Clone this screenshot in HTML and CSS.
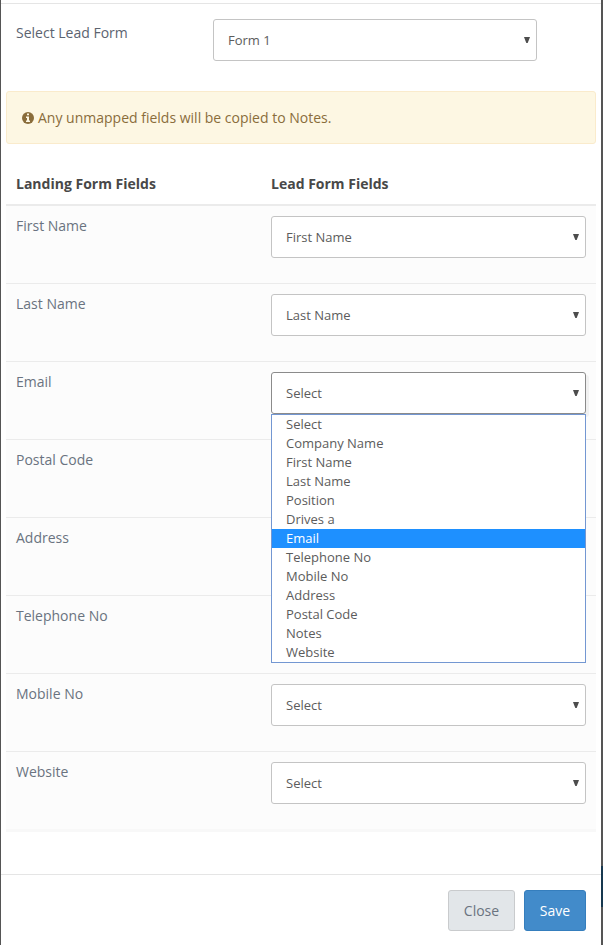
FILE: index.html
```html
<!DOCTYPE html>
<html lang="en">
<head>
<meta charset="utf-8">
<title>Field Mapping</title>
<link rel="stylesheet" href="styles.css">
</head>
<body>
<div class="modal">
  <div class="modal-top"></div>
  <div class="form-row">
    <label>Select Lead Form</label>
    <div class="select lead-select"><span>Form 1</span><svg class="caret" viewBox="0 0 6 6"><path d="M0 0H6L3.7 6H2.3Z"/></svg></div>
  </div>
  <div class="alert">
    <svg class="info" viewBox="0 0 12 12"><circle cx="6" cy="6" r="6"/><path d="M5 1.5H7V3.3H5ZM4 4.5H7V8.5H8V10H4V8.5H5V6H4Z"/></svg>
    <span>Any unmapped fields will be copied to Notes.</span>
  </div>
  <div class="table">
    <div class="thead"><div>Landing Form Fields</div><div>Lead Form Fields</div></div>
    <div class="row"><div class="name">First Name</div><div class="select"><span>First Name</span><svg class="caret" viewBox="0 0 6 6"><path d="M0 0H6L3.7 6H2.3Z"/></svg></div></div>
    <div class="row"><div class="name">Last Name</div><div class="select"><span>Last Name</span><svg class="caret" viewBox="0 0 6 6"><path d="M0 0H6L3.7 6H2.3Z"/></svg></div></div>
    <div class="row"><div class="name">Email</div><div class="select open"><span>Select</span><svg class="caret" viewBox="0 0 6 6"><path d="M0 0H6L3.7 6H2.3Z"/></svg>
      <ul class="options">
        <li>Select</li><li>Company Name</li><li>First Name</li><li>Last Name</li><li>Position</li><li>Drives a</li><li class="active">Email</li><li>Telephone No</li><li>Mobile No</li><li>Address</li><li>Postal Code</li><li>Notes</li><li>Website</li>
      </ul></div></div>
    <div class="row"><div class="name">Postal Code</div></div>
    <div class="row"><div class="name">Address</div></div>
    <div class="row"><div class="name">Telephone No</div></div>
    <div class="row"><div class="name">Mobile No</div><div class="select"><span>Select</span><svg class="caret" viewBox="0 0 6 6"><path d="M0 0H6L3.7 6H2.3Z"/></svg></div></div>
    <div class="row"><div class="name">Website</div><div class="select"><span>Select</span><svg class="caret" viewBox="0 0 6 6"><path d="M0 0H6L3.7 6H2.3Z"/></svg></div></div>
  </div>
  <div class="footer"><button class="btn close">Close</button><button class="btn save">Save</button></div>
</div>
</body>
</html>
```
FILE: styles.css
```css
* { box-sizing: border-box; }
body {
  margin: 0;
  height: 945px;
  overflow: hidden;
  padding: 0 2px 0 1px;
  background: linear-gradient(#17384f, #17384f) 601px 866px / 2px 41px no-repeat, #555;
  font: 14px/20px "Open Sans", sans-serif;
  color: #6a7380;
}
.modal { height: 945px; background: #fff; }
.modal-top { height: 4px; border-bottom: 1px solid #e5e5e5; }
.form-row { display: flex; height: 87px; padding: 15px 0 0 15px; color: #5b6370; }
.form-row label { width: 197px; padding-top: 4px; }
.select {
  position: relative;
  display: flex;
  align-items: center;
  justify-content: space-between;
  width: 315px;
  height: 42px;
  padding: 0 6px 0 14px;
  border: 1px solid #c4c4c4;
  border-radius: 3px;
  background: #fff;
  font-size: 13px;
  color: #5c5c5c;
}
.select.lead-select { width: 324px; }
.caret { width: 6px; height: 6px; fill: #4d4d4d; }
.alert {
  display: flex;
  align-items: center;
  height: 53px;
  margin: 0 5px;
  padding-left: 15px;
  border: 1px solid #faebcc;
  border-radius: 3px;
  background: #fdf7e3;
  color: #8a6d3b;
}
.info { width: 12px; height: 12px; margin-right: 4px; fill: #8a6d3b; }
.info path { fill: #fdf7e3; }
.table { margin: 20px 5px 0; border-bottom: 3px solid #f8f8f8; }
.thead {
  display: grid;
  grid-template-columns: 255px 1fr;
  height: 42px;
  padding: 10px 10px 0;
  border-bottom: 2px solid #ebebeb;
  font-weight: 700;
  color: #484848;
}
.row {
  display: grid;
  grid-template-columns: 255px 315px;
  align-items: start;
  height: 78px;
  padding: 10px 10px 0;
  border-top: 1px solid #ebebeb;
  background: #fcfcfc;
}
.thead + .row { height: 77px; border-top: 0; }
.select.open { border-color: #8b8b8b; box-shadow: 3px 3px 0 #f1f1f1; }
.options {
  position: absolute;
  z-index: 2;
  top: 41px;
  left: -1px;
  width: 315px;
  margin: 0;
  padding: 0;
  list-style: none;
  border: 1px solid #7397d2;
  background: #fff;
  line-height: 19px;
}
.options li { height: 19px; padding-left: 14px; }
.options .active { background: #1e90ff; color: #fff; }
.footer {
  display: flex;
  justify-content: flex-end;
  gap: 9px;
  margin-top: 42px;
  padding: 15px 15px 0 0;
  border-top: 1px solid #e5e5e5;
}
.btn {
  height: 41px;
  padding: 0;
  border-radius: 3px;
  font: 14px/20px "Open Sans", sans-serif;
}
.close { width: 67px; border: 1px solid #c9cbcd; background: #e2e6e9; color: #6a7380; }
.save { width: 62px; border: 1px solid #357ebd; background: #428bca; color: #fff; }
```
